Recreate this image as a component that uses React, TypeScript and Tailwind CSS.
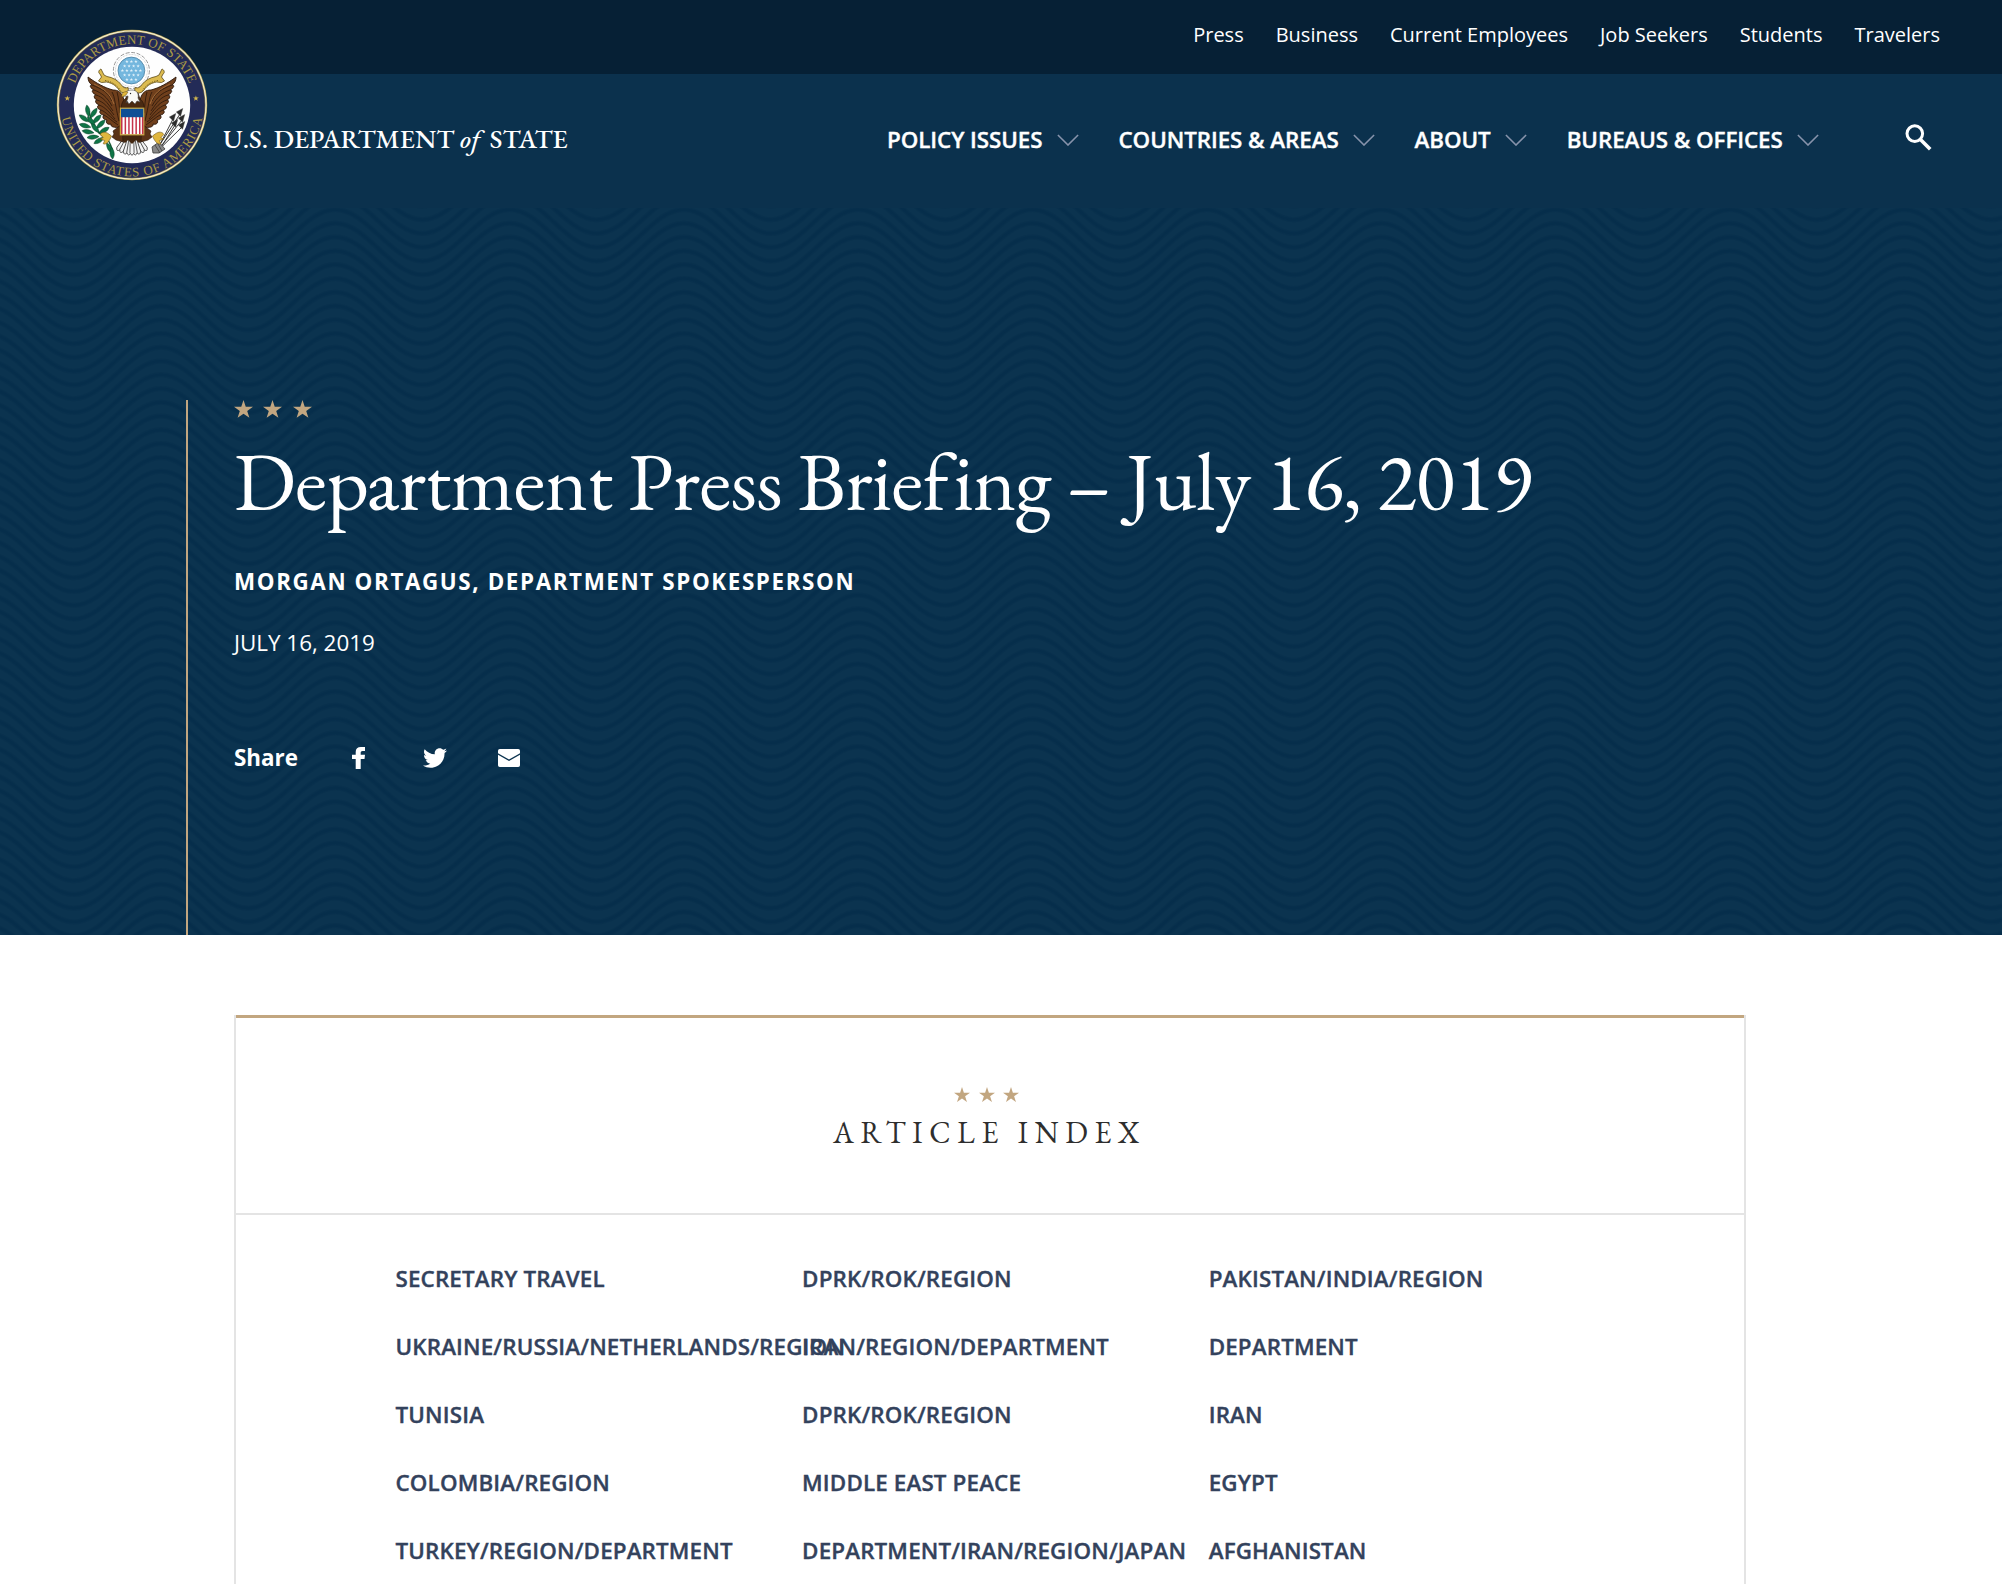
import React from "react";
import { FaTwitter } from "react-icons/fa";

const TOP_LINKS = ["Press", "Business", "Current Employees", "Job Seekers", "Students", "Travelers"];
const NAV_LINKS = ["POLICY ISSUES", "COUNTRIES & AREAS", "ABOUT", "BUREAUS & OFFICES"];
const INDEX = [
  "SECRETARY TRAVEL", "DPRK/ROK/REGION", "PAKISTAN/INDIA/REGION",
  "UKRAINE/RUSSIA/NETHERLANDS/REGION", "IRAN/REGION/DEPARTMENT", "DEPARTMENT",
  "TUNISIA", "DPRK/ROK/REGION", "IRAN",
  "COLOMBIA/REGION", "MIDDLE EAST PEACE", "EGYPT",
  "TURKEY/REGION/DEPARTMENT", "DEPARTMENT/IRAN/REGION/JAPAN", "AFGHANISTAN",
];

const STAR = "M10 0l2.36 7.1H20l-6.1 4.5 2.3 7.2L10 14.4l-6.2 4.4 2.3-7.2L0 7.1h7.64z";

function Stars({ size, gap }: { size: number; gap: string }) {
  return (
    <div className={`flex ${gap}`}>
      {[0, 1, 2].map((i) => (
        <svg key={i} width={size} height={size * 0.94} viewBox="0 0 20 18.8" className="block fill-[#c2a680]">
          <path d={STAR} />
        </svg>
      ))}
    </div>
  );
}

/* Repeating wave lines behind the hero */
const PERIOD = 174.3;
const AMP = 51.5;
function wave(y: number) {
  const h = PERIOD / 2;
  let x = 161 - PERIOD * 2;
  let d = `M${x} ${y}`;
  for (let i = 0; i < 30; i++) {
    const a = i % 2 === 0 ? y : y + AMP;
    const b = i % 2 === 0 ? y + AMP : y;
    d += `C${x + h * 0.3642} ${a} ${x + h * 0.6358} ${b} ${x + h} ${b}`;
    x += h;
  }
  return d;
}
function Waves() {
  return (
    <svg className="absolute inset-0 h-full w-full" aria-hidden="true">
      <g fill="none" stroke="#022844" strokeOpacity="0.2">
        {Array.from({ length: 60 }, (_, i) => {
          const d = wave(15.3 - 13.77 * 5 + i * 13.77);
          return (
            <React.Fragment key={i}>
              <path d={d} strokeWidth="5" />
              <path d={d} strokeWidth="2.2" />
            </React.Fragment>
          );
        })}
      </g>
    </svg>
  );
}

function Wing() {
  return (
    <g>
      <path
        d="M-8 -5C-10 -13-14 -15-19 -15-27 -17-36 -22-44 -28-44 -25-43 -22-40 -20-43 -20-42 -17-38 -15-41 -15-40 -12-36 -10-39 -10-38 -6-35 -5-38 -5-36 -1-33 0-36 1-34 5-31 5-34 7-31 10-28 10-31 13-27 15-25 15-27 18-24 20-21 19-22 22-17 23-12 22-10 20-10 12-8 0-8 -5z"
        fill="#6f3f1c" stroke="#2a160a" strokeWidth="0.9"
      />
      <g fill="none" stroke="#2a160a" strokeWidth="0.8">
        <path d="M-40 -20C-30 -16-24 -13-20 -4" />
        <path d="M-38 -15C-30 -12-25 -8-20 1" />
        <path d="M-36 -10C-29 -8-25 -3-19 6" />
        <path d="M-35 -5C-28 -3-24 2-18 10" />
        <path d="M-33 0C-27 2-23 7-17 14" />
        <path d="M-31 5C-26 7-22 12-15 17" />
        <path d="M-28 10C-24 12-20 16-14 20" />
        <path d="M-20 -13C-17 -8-17 0-13 16" />
        <path d="M-15 -13C-13 -6-13 0-12 8" />
      </g>
      <path d="M-38 -21C-28 -16-22 -12-18 -1" fill="none" stroke="#a8713c" strokeWidth="0.9" />
    </g>
  );
}

function Banner() {
  return (
    <g>
      <path
        d="M-31 -36c-2.500 1-3 4-1 5l1.500 3-3 4 3 1.500 5-.5c5 1 9 3 12.500 8 2 3 6 4 9.500 1.500l-.5-4c-3 1-5 0-7-3-3-4-8-7-14-8l-3-1.500z"
        fill="#dcbb50" stroke="#5d4a16" strokeWidth="0.8"
      />
      <path d="M-27 -24.500c7 1 12 5 15.500 10" fill="none" stroke="#6d5618" strokeWidth="0.9" strokeDasharray="1.4 1.2" />
    </g>
  );
}

function Seal() {
  return (
    <svg width="152" height="152" viewBox="-76 -76 152 152" className="block shrink-0">
      <defs>
        <path id="arc-top" d="M-61 0A61 61 0 0 1 61 0" />
        <path id="arc-bottom" d="M-71.5 0A71.5 71.5 0 0 0 71.5 0" />
      </defs>
      <circle r="75.2" fill="#b9a34e" />
      <circle r="74.6" fill="#f3edcf" />
      <circle r="73.4" fill="#8d7f4b" />
      <circle r="72.8" fill="#232b57" />
      <circle r="58.2" fill="#fefefe" />
      <g fill="#aa9a45" fontFamily="'Liberation Serif', serif" fontSize="13">
        <text>
          <textPath href="#arc-top" startOffset="50%" textAnchor="middle" textLength="148">DEPARTMENT OF STATE</textPath>
        </text>
        <text>
          <textPath href="#arc-bottom" startOffset="50%" textAnchor="middle" textLength="198">UNITED STATES OF AMERICA</textPath>
        </text>
      </g>
      <g fill="#d3b84e">
        <path d={STAR} transform="translate(-67.6 -9.6) scale(.29)" />
        <path d={STAR} transform="translate(61 -9.6) scale(.29)" />
      </g>

      {/* glory */}
      <circle cx="-.6" cy="-34.5" r="18" fill="#fff" stroke="#8c8c8c" strokeWidth="0.9" strokeDasharray="4 1.6" />
      <circle cx="-.6" cy="-34.5" r="16" fill="#fff" stroke="#c4c4c4" strokeWidth="0.7" strokeDasharray="2 1" />
      <circle cx="-.6" cy="-34.5" r="13.4" fill="#74b7de" stroke="#4a7f9f" strokeWidth="0.8" />
      <g fill="#e2f2fb">
        {[-9, -4.5, 0, 4.5, 9].map((y, r) =>
          [-9, -4.5, 0, 4.5, 9].map((x) => {
            const px = x + (r % 2 ? 2.2 : 0);
            return px * px + y * y < 125 ? (
              <path key={`${x},${y}`} d={STAR} transform={`translate(${px - 2.3} ${y - 36.2}) scale(.17)`} />
            ) : null;
          }),
        )}
      </g>

      {/* wings and scroll */}
      <Wing />
      <g transform="scale(-1 1)"><Wing /></g>
      <Banner />
      <g transform="translate(-1 0) scale(-1 1)"><Banner /></g>

      {/* tail */}
      <g fill="#f4f4f4" stroke="#333" strokeWidth="0.8">
        {[-36, 36, -27, 27, -17, 17, -8, 8, 0].map((a) => (
          <path key={a} d="M-1.6 0L-2.2 24Q0 29 2.2 24L1.6 0z" transform={`translate(0 25) rotate(${a}) scale(.95)`} />
        ))}
      </g>
      <path d="M-8 25L8 25 11 35 7 38 4 35 0 39-4 35-7 38-11 35z" fill="#43260f" />

      {/* legs */}
      <path d="M-10 19l-9 7 1 3-2 3 4 3 7 2z" fill="#5a3216" stroke="#28150a" strokeWidth="0.6" />
      <path d="M10 19l9 7-1 3 2 3-4 3-7 2z" fill="#5a3216" stroke="#28150a" strokeWidth="0.6" />

      {/* olive branch */}
      <g transform="translate(2 1)">
        <path d="M-45 5C-43 17-36 28-27 33-24 36-22 42-21 49" fill="none" stroke="#1c5b38" strokeWidth="1.4" />
        <g fill="#0f7547" stroke="#0c3f27" strokeWidth="0.5">
          {[
            [-46, 6, -10], [-49, 13, -55], [-41, 8, 35], [-48, 20, -75], [-38, 14, 45], [-45, 26, -80],
            [-34, 19, 45], [-40, 31, -95], [-31, 25, 60], [-34, 34, -120], [-25, 41, 150], [-22, 46, 175],
            [-42, 16, -40], [-38, 23, -40],
          ].map(([x, y, a], i) => (
            <path key={i} d="M0 5C-3-0-2.500-4 0-7 2.500-4 3 0 0 5z" transform={`translate(${x} ${y}) rotate(${a})`} />
          ))}
        </g>
      </g>

      {/* arrows */}
      <g stroke="#3a3a3a" strokeWidth="1" fill="#2b2b2b">
        {[[49, 6], [42, 11], [51, 12], [44, 17], [51, 19]].map(([x, y], i) => (
          <g key={i}>
            <path d={`M${23 + i * 2} ${47 - i * 1.6}L${x - 1} ${y + 3}`} />
            <path d="M0-3L-3.200 3.500 2.600 4.500z" transform={`translate(${x} ${y}) rotate(35)`} strokeWidth=".4" />
          </g>
        ))}
        <path d="M20 42l7-5 6 7-6 4-6 0z" fill="#888" strokeWidth="0.8" />
        <path d="M23 40l5 8M26 39l4 7" stroke="#333" strokeWidth=".7" />
      </g>

      {/* talons */}
      <g fill="#e0b63e" stroke="#6d5314" strokeWidth="0.8">
        <path d="M-34 29c2-4 7-4 11-1l4 3-2 4c-2 4-6 8-9 6l2-4-6-2 4-2z" transform="translate(-6 7.500) scale(.76)" />
        <path d="M34 29c-2-4-7-4-11-1l-4 3 2 4c2 4 6 8 9 6l-2-4 6-2-4-2z" transform="translate(6 7.500) scale(.76)" />
      </g>

      {/* head and neck */}
      <path d="M-10 6C-12 0-9-5-6-7L-5-11 6-12 8-6C11-4 13 0 11 6z" fill="#4a2a12" stroke="#28150a" strokeWidth="0.7" />
      <path d="M-6 -2C-5-5-4-6-4-9-6-8-8-10-9-8-9-12-5-15 0-15 5-15 7-11 6-7l2 4-3-1-2 3-3-3-3 3-2-3z" fill="#f8f8f5" stroke="#444" strokeWidth="0.6" />
      <path d="M-4-13c-4-1-7 1-6 5l4-2z" fill="#e0b63e" stroke="#6d5314" strokeWidth=".5" />
      <circle cx="-1.500" cy="-11.500" r=".7" fill="#222" />

      {/* shield */}
      <rect x="-11.6" y="3.2" width="23.4" height="26.6" fill="#fff" stroke="#c9a93c" strokeWidth="1.2" />
      <g fill="#c5324a">
        {[-11, -7.4, -3.8, -0.2, 3.4, 7, 9.9].map((x) => (
          <rect key={x} x={x} y="12" width="1.5" height="17.2" />
        ))}
      </g>
      <rect x="-11" y="3.8" width="22.2" height="8.4" fill="#0d4f95" />
    </svg>
  );
}

function Chevron() {
  return (
    <svg width="22" height="12" viewBox="0 0 22 12" className="ml-[14px] block">
      <path d="M.9 1L11 11 21.1 1" fill="none" stroke="#8793ab" strokeWidth="1.6" />
    </svg>
  );
}

export default function App() {
  return (
    <div className="flex h-[1584px] w-[2002px] flex-col overflow-hidden bg-white font-['Open_Sans','Noto_Sans',sans-serif] text-white">
      <header className="relative h-[208px] shrink-0 bg-[#0b314d]">
        <div className="flex h-[74px] justify-end gap-8 bg-[#062035] pt-[21px] pr-[62px] text-[20px] leading-7">
          {TOP_LINKS.map((t) => (
            <a key={t}>{t}</a>
          ))}
        </div>
        <nav className="flex h-[134px] items-start pt-[50px] pl-[887px] text-[22.4px] leading-[32px] font-semibold tracking-[-0.08px] [-webkit-text-stroke:0.35px_currentColor]">
          {NAV_LINKS.map((t) => (
            <a key={t} className="mr-[40px] flex items-center whitespace-nowrap">
              {t}
              <Chevron />
            </a>
          ))}
          <svg width="27" height="27" viewBox="0 0 27 27" className="ml-[46px] block">
            <circle cx="9.8" cy="9.6" r="7.8" fill="none" stroke="#fff" strokeWidth="3" />
            <path d="M15 15L25.2 25.2" stroke="#fff" strokeWidth="3.6" />
          </svg>
        </nav>
        <a className="absolute top-[28.5px] left-[56px] flex">
          <Seal />
          <span className="mt-[92px] ml-[15px] font-['EB_Garamond','Liberation_Serif',serif] text-[26.7px] leading-9 font-medium whitespace-nowrap">
            U.S. DEPARTMENT <i className="mr-[4px]">of</i> STATE
          </span>
        </a>
      </header>

      <section className="relative flex h-[727px] shrink-0 bg-[#0b334f] pl-[186px]">
        <Waves />
        <div className="relative mt-[192px] w-full border-l-2 border-[#c2a680] pl-[46px]">
          <Stars size={19} gap="gap-[10.3px]" />
          <h1 className="mt-[18px] font-['EB_Garamond','Liberation_Serif',serif] text-[82px] leading-[90px] tracking-[-0.71px] whitespace-nowrap">
            Department Press Briefing – July 16, 2019
          </h1>
          <p className="mt-[41px] text-[22.4px] leading-[30px] font-bold tracking-[1.6px]">
            MORGAN ORTAGUS, DEPARTMENT SPOKESPERSON
          </p>
          <p className="mt-[31px] text-[22.4px] leading-[30px]">JULY 16, 2019</p>
          <div className="mt-[85px] flex items-center text-[22.4px] leading-[30px] font-bold">
            <span className="w-[118px]">Share</span>
            <svg width="13" height="22" viewBox="0 0 13 22" className="block fill-white">
              <path d="M3.7 22V12H0V7.8h3.7V5C3.7 1.7 5.6 0 8.9 0H13v3.9h-2.4C9.2 3.9 8.7 4.6 8.7 5.8v2H13L12.5 12H8.7v10z" />
            </svg>
            <FaTwitter className="ml-[58px] text-[24px]" />
            <svg width="22" height="18" viewBox="0 0 22 18" className="ml-[51px] block fill-white">
              <path d="M1.8 0h18.4Q22 0 22 1.8v2.4L11 10.4 0 4.200V1.8Q0 0 1.800 0z" />
              <path d="M0 5.800L11 12 22 5.800V16.200Q22 18 20.200 18H1.800Q0 18 0 16.200z" />
            </svg>
          </div>
        </div>
      </section>

      <main className="mt-20 ml-[234px] flex w-[1512px] grow flex-col border-x-2 border-[#e4e4e4] text-[#33425c]">
        <div className="flex h-[200px] shrink-0 flex-col items-center border-t-[3px] border-b-2 border-t-[#c2a680] border-b-[#e4e4e4] pt-[69px]">
          <div className="mr-[7px]">
            <Stars size={16} gap="gap-[8.8px]" />
          </div>
          <h2 className="mt-[11px] mr-px font-['EB_Garamond','Liberation_Serif',serif] text-[30px] leading-10 tracking-[6.7px] text-[#2e2e2e]">
            ARTICLE INDEX
          </h2>
        </div>
        <div className="grid grid-cols-[406.6px_406.6px_406.6px] pt-[30px] pl-[159.5px] text-[22.4px] leading-[68px] font-semibold tracking-[0.14px] [-webkit-text-stroke:0.35px_currentColor]">
          {INDEX.map((t, i) => (
            <a key={i} className="whitespace-nowrap">{t}</a>
          ))}
        </div>
      </main>
    </div>
  );
}
